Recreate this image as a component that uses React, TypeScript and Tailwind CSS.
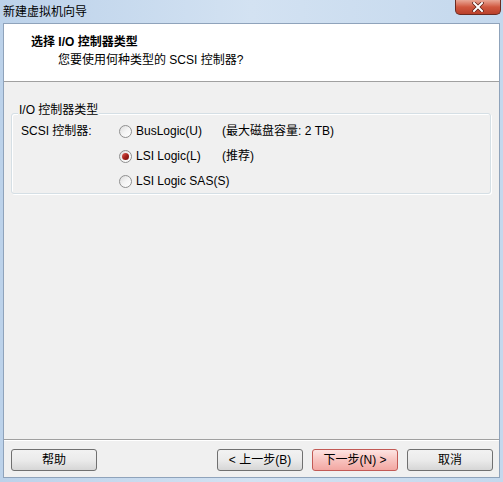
// App.tsx - VMware 新建虚拟机向导, I/O controller step
const font = { fontFamily: '"Liberation Sans", "Noto Sans CJK SC", sans-serif' };

const Radio = ({ checked }: { checked?: boolean }) => (
  <span className="w-[13px] h-[13px] rounded-full border border-[#8f8f8f] bg-gradient-to-br from-[#dcdcdc] via-[#f4f4f4] to-[#ffffff] flex items-center justify-center shrink-0">
    {checked && (
      <span className="w-[7px] h-[7px] rounded-full bg-gradient-to-br from-[#e0605a] via-[#a8221c] to-[#6e0f0c]" />
    )}
  </span>
);

const Button = ({ label, primary }: { label: string; primary?: boolean }) => (
  <button
    type="button"
    className={
      primary
        ? 'w-[86px] h-[22px] rounded-[3px] border border-[#c25a55] bg-gradient-to-b from-[#fde4e2] via-[#f8c3bf] to-[#f2a7a2] text-[12px] text-black flex items-center justify-center'
        : 'w-[86px] h-[22px] rounded-[3px] border border-[#707070] bg-gradient-to-b from-[#f2f2f2] via-[#ebebeb] to-[#d6d6d6] text-[12px] text-black flex items-center justify-center'
    }
  >
    {label}
  </button>
);

const options = [
  { label: 'BusLogic(U)', note: '(最大磁盘容量: 2 TB)', checked: false },
  { label: 'LSI Logic(L)', note: '(推荐)', checked: true },
  { label: 'LSI Logic SAS(S)', note: '', checked: false },
];

const App = () => {
  return (
    <div
      className="w-[503px] h-[482px] flex flex-col bg-gradient-to-r from-[#bcd2ea] via-[#d3e2f2] to-[#c4d8ed] text-black"
      style={font}
    >
      {/* title bar */}
      <div className="h-[23px] flex items-start justify-between pl-[3px] pr-[2px]">
        <span className="text-[12px] leading-[24px]">新建虚拟机向导</span>
        <div className="w-[46px] h-[15px] rounded-b-[5px] border border-t-0 border-[#6b2a20] bg-gradient-to-b from-[#e8a797] via-[#d0573f] to-[#b9402a] flex items-center justify-center">
          <svg width="12" height="10" viewBox="0 0 12 10">
            <path d="M2 1 L10 9 M10 1 L2 9" stroke="#5a1c14" strokeWidth="3.4" strokeLinecap="square" />
            <path d="M2 1 L10 9 M10 1 L2 9" stroke="#ffffff" strokeWidth="2" strokeLinecap="square" />
          </svg>
        </div>
      </div>

      {/* client area */}
      <div className="flex-1 mx-[3px] mb-[4px] border border-[#8fa3bb] bg-[#f0f0f0] flex flex-col">
        <div className="h-[58px] bg-white border-b border-[#a0a0a0] pl-[27px] pt-[10px]">
          <div className="text-[12px] font-bold leading-[16px]">选择 I/O 控制器类型</div>
          <div className="text-[12px] leading-[16px] mt-[2px] pl-[27px]">您要使用何种类型的 SCSI 控制器?</div>
        </div>

        <div className="flex-1 pt-[31px] pl-[7px] pr-[8px] border-b border-[#a0a0a0]">
          <div className="relative h-[81px] rounded-[3px] border border-[#d5dfe5] shadow-[inset_1px_1px_0_#ffffff,1px_1px_0_#ffffff] pt-[7px] pl-[9px]">
            <span className="absolute -top-[12px] left-[6px] px-[1px] bg-[#f0f0f0] text-[12px] leading-[16px]">
              I/O 控制器类型
            </span>
            <div className="grid grid-cols-[98px_103px_1fr] gap-y-[5px] text-[12px]">
              {options.map((o, i) => (
                <div key={o.label} className="contents">
                  <span className="h-[20px] flex items-center">{i === 0 ? 'SCSI 控制器:' : ''}</span>
                  <span className="h-[20px] flex items-center gap-[4px] whitespace-nowrap">
                    <Radio checked={o.checked} />
                    {o.label}
                  </span>
                  <span className="h-[20px] flex items-center whitespace-nowrap">{o.note}</span>
                </div>
              ))}
            </div>
          </div>
        </div>

        <div className="h-[37px] border-t border-white flex items-start pt-[8px] pl-[7px] pr-[6px]">
          <Button label="帮助" />
          <div className="ml-auto flex gap-[9px]">
            <Button label="< 上一步(B)" />
            <Button label="下一步(N) >" primary />
            <Button label="取消" />
          </div>
        </div>
      </div>
    </div>
  );
};

export default App;
